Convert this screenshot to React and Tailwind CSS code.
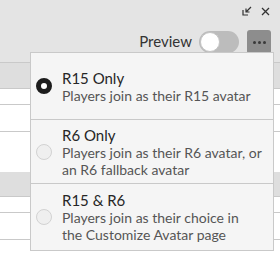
import { useState } from "react";

const options = [
  {
    id: "r15",
    title: "R15 Only",
    lines: ["Players join as their R15 avatar"],
    h: "h-[67px]",
  },
  {
    id: "r6",
    title: "R6 Only",
    lines: ["Players join as their R6 avatar, or", "an R6 fallback avatar"],
    h: "h-[64px]",
  },
  {
    id: "both",
    title: "R15 & R6",
    lines: ["Players join as their choice in", "the Customize Avatar page"],
    h: "h-[66px]",
  },
];

const Radio = ({ checked }) =>
  checked ? (
    <span className="w-4 h-4 rounded-full border-[5px] border-[#1c1c1c] bg-white shrink-0" />
  ) : (
    <span className="w-4 h-4 rounded-full border border-[#d2d2d2] bg-[#efefef] shrink-0" />
  );

const App = () => {
  const [selected, setSelected] = useState("r15");

  return (
    <div className="relative w-[280px] h-[264px] overflow-hidden bg-white font-['Lato',sans-serif]">
      {/* title bar */}
      <div className="h-[22px] bg-[#e4e4e4] flex items-center justify-end gap-[9px] pr-[10px]">
        <svg width="10" height="10" viewBox="0 0 10 10" fill="none" stroke="#333" strokeWidth="1.2">
          <path d="M1 4v5h5" />
          <path d="M9 1L4 6M4 2.5V6h3.5" />
        </svg>
        <svg width="9" height="9" viewBox="0 0 9 9" stroke="#333" strokeWidth="1.3">
          <path d="M1 1l7 7M8 1L1 8" />
        </svg>
      </div>

      {/* toolbar */}
      <div className="h-[41px] bg-[#e4e4e4] border-b border-[#c9c9c9] flex items-center justify-end pr-[9px]">
        <span className="text-[15px] text-[#333] mr-[7px] -mt-[1px]">Preview</span>
        <div className="w-10 h-[22px] rounded-full bg-[#bcbcbc] flex items-center px-[1px] mr-[8px]">
          <span className="w-5 h-5 rounded-full bg-white border border-[#c4c4c4]" />
        </div>
        <button className="w-6 h-6 rounded-[3px] bg-[#8d8d8d] flex items-center justify-center gap-[2px]">
          <span className="w-[3px] h-[3px] rounded-full bg-[#3a3a3a]" />
          <span className="w-[3px] h-[3px] rounded-full bg-[#3a3a3a]" />
          <span className="w-[3px] h-[3px] rounded-full bg-[#3a3a3a]" />
        </button>
      </div>

      {/* rows behind */}
      <div className="h-[26px] bg-[#dedede] border-b border-[#c9c9c9]" />
      <div className="h-[16px] border-b border-[#c9c9c9]" />
      <div className="h-[27px] border-b border-[#c9c9c9]" />
      <div className="h-[40px]" />
      <div className="h-[25px] bg-[#dedede] border-b border-[#c9c9c9]" />
      <div className="h-[16px] border-b border-[#c9c9c9]" />
      <div className="h-[27px] border-b border-[#c9c9c9]" />

      {/* dropdown */}
      <div className="absolute left-[30px] top-[52px] w-[244px] bg-[#f5f5f5] border border-[#c9c9c9]">
        {options.map((o, i) => (
          <div
            key={o.id}
            onClick={() => setSelected(o.id)}
            className={`${o.h} flex items-center gap-[10px] pl-[5px] pr-2 ${
              i < options.length - 1 ? "border-b border-[#c9c9c9]" : ""
            }`}
          >
            <Radio checked={selected === o.id} />
            <div className="whitespace-nowrap">
              <div className="text-[15px] leading-[18px] text-[#262626]">{o.title}</div>
              {o.lines.map((l) => (
                <div key={l} className="text-[14px] leading-[17px] text-[#555]">
                  {l}
                </div>
              ))}
            </div>
          </div>
        ))}
      </div>
    </div>
  );
};

export default App;
